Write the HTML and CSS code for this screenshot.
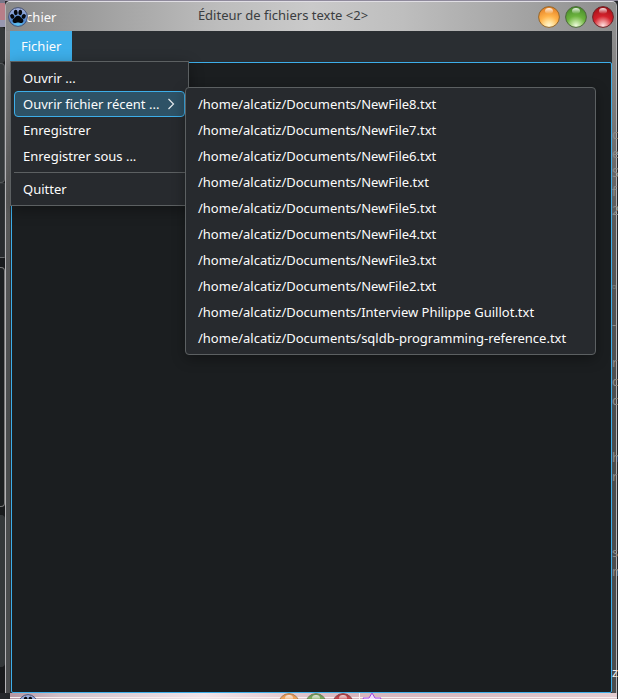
FILE: index.html
```
<!DOCTYPE html>
<html lang="fr">
<head>
<meta charset="utf-8">
<title>Éditeur de fichiers texte</title>
<link rel="stylesheet" href="styles.css">
</head>
<body>
<svg class="defs" aria-hidden="true">
  <defs>
    <radialGradient id="amber" cx=".5" cy=".92" r=".85"><stop offset="0" stop-color="#fff8d8"/><stop offset=".25" stop-color="#ffe09a"/><stop offset=".55" stop-color="#ffb34a"/><stop offset="1" stop-color="#e8862a"/></radialGradient>
    <radialGradient id="green" cx=".5" cy=".92" r=".85"><stop offset="0" stop-color="#f0fbe0"/><stop offset=".25" stop-color="#b4dd92"/><stop offset=".55" stop-color="#6cb33e"/><stop offset="1" stop-color="#4a8f2c"/></radialGradient>
    <radialGradient id="red" cx=".5" cy=".92" r=".85"><stop offset="0" stop-color="#ffe4e4"/><stop offset=".25" stop-color="#ee9092"/><stop offset=".55" stop-color="#d4222c"/><stop offset="1" stop-color="#a81219"/></radialGradient>
    <radialGradient id="blue" cx=".5" cy="1" r=".95"><stop offset="0" stop-color="#5cd0ff"/><stop offset=".5" stop-color="#5286cc"/><stop offset="1" stop-color="#a4b0dc"/></radialGradient>
    <linearGradient id="shine" x2="0" y2="1"><stop offset="0" stop-color="#fff" stop-opacity=".9"/><stop offset="1" stop-color="#fff" stop-opacity="0"/></linearGradient>
    <symbol id="paw" viewBox="0 0 22 22">
      <circle cx="11" cy="11" r="10.300" fill="url(#blue)" stroke="#3c4a70"/>
      <g fill="#05070c">
        <path d="M11 9.500c2.600 0 3.200 2.200 4.800 3.400 2 1.700 1.200 4.800-1.400 4.700-1.400 0-2-.6-3.400-.6s-2 .6-3.400.6c-2.600.1-3.400-3-1.400-4.700C7.800 11.700 8.400 9.500 11 9.500z"/>
        <ellipse cx="4.700" cy="10.300" rx="2.200" ry="2.700" transform="rotate(-28 4.700 10.300)"/>
        <ellipse cx="8.500" cy="6" rx="2.100" ry="3" transform="rotate(-8 8.500 6)"/>
        <ellipse cx="13.500" cy="6" rx="2.100" ry="3" transform="rotate(8 13.500 6)"/>
        <ellipse cx="17.300" cy="10.300" rx="2.200" ry="2.700" transform="rotate(28 17.300 10.300)"/>
      </g>
    </symbol>
    <symbol id="orb-amber" viewBox="0 0 22 22"><circle cx="11" cy="11" r="10.400" fill="url(#amber)" stroke="#94682e"/><ellipse cx="11" cy="5" rx="4" ry="3" fill="url(#shine)"/></symbol>
    <symbol id="orb-green" viewBox="0 0 22 22"><circle cx="11" cy="11" r="10.400" fill="url(#green)" stroke="#4d683c"/><ellipse cx="11" cy="5" rx="4" ry="3" fill="url(#shine)"/></symbol>
    <symbol id="orb-red" viewBox="0 0 22 22"><circle cx="11" cy="11" r="10.400" fill="url(#red)" stroke="#6c2428"/><ellipse cx="11" cy="5" rx="4" ry="3" fill="url(#shine)"/></symbol>
  </defs>
</svg>

<div class="desktop">
  <div class="behind-left" aria-hidden="true">
    <div class="pink"></div><div class="pane pane-a"></div><div class="pane pane-b"></div><div class="pane pane-c"></div><div class="pane pane-d"></div><div class="pane pane-e"></div>
  </div>

  <section class="window">
    <header class="titlebar">
      <span class="ghost" aria-hidden="true">Fichier</span>
      <svg class="paw"><use href="#paw"/></svg>
      <h1 class="title">Éditeur de fichiers texte &lt;2&gt;</h1>
      <div class="controls">
        <button type="button" aria-label="Réduire"><svg><use href="#orb-amber"/></svg></button>
        <button type="button" aria-label="Agrandir"><svg><use href="#orb-green"/></svg></button>
        <button type="button" aria-label="Fermer"><svg><use href="#orb-red"/></svg></button>
      </div>
    </header>
    <div class="client">
      <nav class="menubar">
        <button type="button" class="menubar-item">Fichier</button>
        <div class="menu file-menu">
          <button type="button" class="item">Ouvrir ...</button>
          <button type="button" class="item active">Ouvrir fichier récent ...
            <svg class="chevron" viewBox="0 0 8 12"><path d="M1.500 1 6.500 6 1.500 11" fill="none" stroke="#e4eaed" stroke-width="1.200"/></svg>
          </button>
          <button type="button" class="item">Enregistrer</button>
          <button type="button" class="item">Enregistrer sous ...</button>
          <hr>
          <button type="button" class="item">Quitter</button>
        </div>
        <div class="menu recent-menu">
          <button type="button" class="item">/home/alcatiz/Documents/NewFile8.txt</button>
          <button type="button" class="item">/home/alcatiz/Documents/NewFile7.txt</button>
          <button type="button" class="item">/home/alcatiz/Documents/NewFile6.txt</button>
          <button type="button" class="item">/home/alcatiz/Documents/NewFile.txt</button>
          <button type="button" class="item">/home/alcatiz/Documents/NewFile5.txt</button>
          <button type="button" class="item">/home/alcatiz/Documents/NewFile4.txt</button>
          <button type="button" class="item">/home/alcatiz/Documents/NewFile3.txt</button>
          <button type="button" class="item">/home/alcatiz/Documents/NewFile2.txt</button>
          <button type="button" class="item">/home/alcatiz/Documents/Interview Philippe Guillot.txt</button>
          <button type="button" class="item">/home/alcatiz/Documents/sqldb-programming-reference.txt</button>
        </div>
      </nav>
      <textarea class="editor" aria-label="Texte"></textarea>
    </div>
  </section>

  <div class="behind-text" aria-hidden="true">
    <div>c<br>e<br>S<br>f<br>2<br><br><br><br>▫<br><br>-<br><br>r<br>c<br>c<br><br><br>h<br>r<br><br><br><br>s<br>m</div>
    <div class="bright">za</div>
  </div>

  <footer class="next-window" aria-hidden="true">
    <svg class="paw"><use href="#paw"/></svg>
    <div class="next-controls">
      <svg><use href="#orb-amber"/></svg><svg><use href="#orb-green"/></svg><svg><use href="#orb-red"/></svg>
      <i></i>
      <svg class="star" viewBox="0 0 20 20"><path d="M10 0l3 5 6 0-3 6 3 6H1l3-6-3-6h6z" fill="#f0dcff" stroke="#a044e0"/></svg>
    </div>
  </footer>
</div>
</body>
</html>
```
FILE: styles.css
```
* { box-sizing: border-box; }

body {
  margin: 0;
  background: #25282b;
  color: #fcfcfc;
  font: 13px/18px "Noto Sans", sans-serif;
}

button {
  margin: 0;
  padding: 0;
  border: 0;
  background: none;
  color: inherit;
  font: inherit;
}

svg { display: block; }

.defs { position: absolute; width: 0; height: 0; }

.desktop {
  position: relative;
  display: grid;
  grid-template: 1fr 6px / 5px 1fr;
  height: 100vh;
  overflow: hidden;
  background: linear-gradient(#8f8a9c 1px, #25282b 1px);
}

/* slices of the windows that lie behind */
.behind-left {
  display: flex;
  flex-direction: column;
  background: #191b1d;
}
.pink { height: 27px; background: linear-gradient(#77778a 3px, #b87e88 3px 20px, #9898b0 20px); }
.pane { border: 1px solid #55585a; border-left: 0; border-radius: 0 4px 4px 0; background: #34383a; }
.pane-a { height: 36px; border-color: #34383a; }
.pane-b { height: 120px; }
.pane-c { height: 75px; background: #292c2f; border-color: #34383a #34383a #66696b; border-radius: 0; }
.pane-d { height: 240px; margin-top: 9px; border-color: #777; background: #1d2022; }
.pane-e { height: 152px; margin-top: 8px; border-color: #34383a; background: #34383a; }

.window {
  position: relative;
  display: flex;
  flex-direction: column;
  margin: 1px 1px 0 0;
  border: solid #b4b3b6;
  border-width: 1px 1px 0;
  border-top-color: #e0dee4;
  border-radius: 5px 5px 0 0;
  overflow: hidden;
  background: linear-gradient(#969696, #777 120px, #595959 220px, #4a4c4d 420px, #4a4c4d);
}

.titlebar {
  position: relative;
  display: flex;
  align-items: center;
  height: 29px;
  padding: 0 2px;
  background: linear-gradient(90deg, #898989, #9b9b9b 12%, #bdbdbd 35%, #cacaca 50%, #bebebe 65%, #9c9c9c 90%, #8d8d8d);
}
.ghost { position: absolute; left: 10px; }
.paw { position: relative; width: 20px; height: 22px; flex: none; }
.title {
  flex: 1;
  margin: 0 0 4px;
  color: #3a3d40;
  font-size: 13px;
  font-weight: 400;
  text-align: center;
}
.controls { display: flex; gap: 5px; }
.controls svg { width: 22px; height: 22px; }

.client {
  flex: 1;
  display: flex;
  flex-direction: column;
  margin: 0 4px;
  background: #2a2e32;
}

.menubar { position: relative; height: 30px; }
.menubar-item {
  height: 30px;
  padding: 0 11px;
  background: #3daee9;
}

.editor {
  flex: 1;
  margin: 1px 0 0 1px;
  padding: 6px;
  border: 1px solid #3daee9;
  border-radius: 2px;
  outline: 0;
  resize: none;
  background: #1b1e20;
  color: inherit;
  font: inherit;
}

.menu {
  position: absolute;
  z-index: 1;
  display: flex;
  flex-direction: column;
  padding: 3px;
  border: 1px solid #5c6062;
  background: #272a2e;
  box-shadow: 0 4px 14px #0005;
}
.file-menu { top: 30px; left: 0; width: 179px; }
.recent-menu { top: 56px; left: 175px; width: 411px; border-radius: 4px; }
.item {
  display: flex;
  align-items: center;
  height: 26px;
  padding: 0 9px;
  text-align: left;
  white-space: nowrap;
}
.file-menu .item { width: 171px; }
.active {
  justify-content: space-between;
  padding: 0 8px;
  border: 1px solid #3daee9;
  border-radius: 4px;
  background: #2e5266;
}
.chevron { width: 8px; height: 12px; margin-right: 1px; }
.menu hr {
  width: 100%;
  margin: 3px 0;
  border: 0;
  border-top: 1px solid #5c6062;
}

.behind-text {
  position: absolute;
  top: 125px;
  right: 0;
  width: 6px;
  overflow: hidden;
  color: #8b8b8b;
  font-size: 13px;
  line-height: 19px;
}
.bright { margin-top: 82px; color: #eee; }

.next-window {
  grid-column: 2;
  display: flex;
  margin: 0 1px 0 5px;
  padding-left: 8px;
  overflow: hidden;
  background: linear-gradient(#0000 4px, #f5edf0 4px 5px, #0000 5px), linear-gradient(90deg, #b696a2, #cfc0c8 8%, #f0e4e9 32%, #d7b6be 56%, #d8bcc2 75%, #e2ccd0);
}
.next-controls { display: flex; gap: 5px; margin-left: 240px; }
.next-controls svg { width: 22px; height: 22px; opacity: .75; }
.next-controls i { width: 1px; margin-right: -3px; background: #f5eef0; }
.next-controls .star { width: 20px; height: 20px; opacity: 1; }
```
